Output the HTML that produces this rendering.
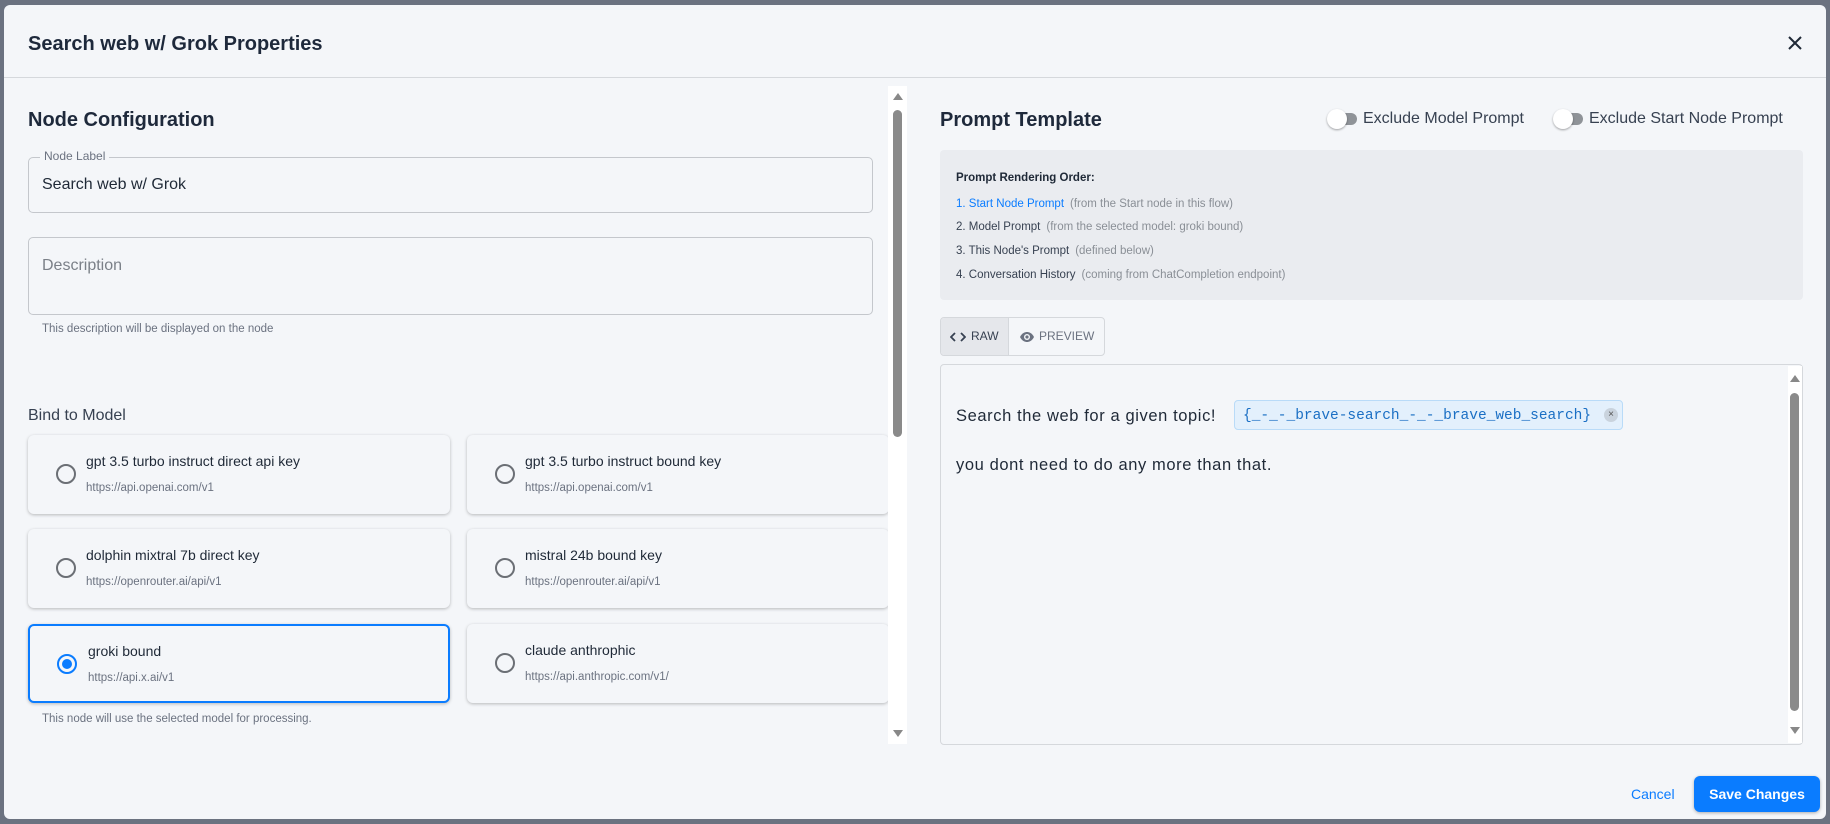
<!DOCTYPE html>
<html><head><meta charset="utf-8"><style>
*{box-sizing:border-box;margin:0;padding:0}
body{width:1830px;height:824px;background:#6b7280;font-family:"Liberation Sans",sans-serif;position:relative;overflow:hidden;color:#1f2937}
.modal{position:absolute;left:4px;top:5px;width:1822px;height:814px;background:#f4f6f9;border-radius:6px}
.abs{position:absolute}
.h1{font-size:20px;font-weight:bold;color:#1e293b}
.field{position:absolute;border:1px solid #c4c7cc;border-radius:5px}
.card{position:absolute;width:422px;height:79px;background:#f4f6f9;border-radius:6px;box-shadow:0 1px 3px rgba(0,0,0,.25)}
.card .r{position:absolute;left:28px;top:29px;width:20px;height:20px;border:2px solid #6b6f75;border-radius:50%}
.card .t{position:absolute;left:58px;top:18px;font-size:14px;color:#1f2937}
.card .u{position:absolute;left:58px;top:47px;font-size:11.5px;color:#6b7280}
.sel{border:2px solid #0a7cff}
.sm{font-size:12px;color:#6b7280}
.ord{position:absolute;left:16px;font-size:11.5px;color:#374151}
.ord span{color:#8a8f96;margin-left:6px}
.tog{position:absolute;width:28px;height:12px;background:#8f9398;border-radius:6px}
.tog:before{content:"";position:absolute;left:-2px;top:-4px;width:20px;height:20px;background:#fff;border-radius:50%;box-shadow:0 1px 2px rgba(0,0,0,.35)}
</style></head><body>
<div class="modal">
<div class="abs h1" style="left:24px;top:28px">Search web w/ Grok Properties</div>
<svg class="abs" style="left:1783px;top:30px" width="16" height="16" viewBox="0 0 16 16"><path d="M2 2L14 14M14 2L2 14" stroke="#1f2937" stroke-width="2"/></svg>
<div class="abs" style="left:0;top:72px;width:1822px;height:1px;background:#d5d8dc"></div>

<div class="abs h1" style="left:24px;top:104px">Node Configuration</div>
<div class="field" style="left:24px;top:152px;width:845px;height:56px"></div>
<div class="abs sm" style="left:36px;top:144px;background:#f4f6f9;padding:0 4px;font-size:12px">Node Label</div>
<div class="abs" style="left:38px;top:171px;font-size:16px;color:#1f2937">Search web w/ Grok</div>
<div class="field" style="left:24px;top:232px;width:845px;height:78px"></div>
<div class="abs" style="left:38px;top:252px;font-size:16px;color:#7b8088">Description</div>
<div class="abs sm" style="left:38px;top:318px;font-size:11.5px">This description will be displayed on the node</div>
<div class="abs" style="left:24px;top:402px;font-size:16px;color:#374151">Bind to Model</div>

<div class="card" style="left:24px;top:430px"><div class="r"></div><div class="t">gpt 3.5 turbo instruct direct api key</div><div class="u">https://api.openai.com/v1</div></div>
<div class="card" style="left:463px;top:430px"><div class="r"></div><div class="t">gpt 3.5 turbo instruct bound key</div><div class="u">https://api.openai.com/v1</div></div>
<div class="card" style="left:24px;top:524px"><div class="r"></div><div class="t">dolphin mixtral 7b direct key</div><div class="u">https://openrouter.ai/api/v1</div></div>
<div class="card" style="left:463px;top:524px"><div class="r"></div><div class="t">mistral 24b bound key</div><div class="u">https://openrouter.ai/api/v1</div></div>
<div class="card sel" style="left:24px;top:619px"><div class="r" style="border-color:#0a7cff;left:27px;top:28px"><div style="position:absolute;left:3px;top:3px;width:10px;height:10px;border-radius:50%;background:#0a7cff"></div></div><div class="t" style="left:58px;top:17px">groki bound</div><div class="u" style="left:58px;top:46px">https://api.x.ai/v1</div></div>
<div class="card" style="left:463px;top:619px"><div class="r"></div><div class="t">claude anthrophic</div><div class="u">https://api.anthropic.com/v1/</div></div>
<div class="abs sm" style="left:38px;top:708px;font-size:11.5px">This node will use the selected model for processing.</div>

<div class="abs" style="left:884px;top:81px;width:19px;height:658px;background:#fff"></div>
<div class="abs" style="left:889px;top:88px;width:0;height:0;border-left:5px solid transparent;border-right:5px solid transparent;border-bottom:7px solid #888"></div>
<div class="abs" style="left:889px;top:105px;width:9px;height:327px;background:#8a8a8a;border-radius:5px"></div>
<div class="abs" style="left:889px;top:725px;width:0;height:0;border-left:5px solid transparent;border-right:5px solid transparent;border-top:7px solid #888"></div>

<div class="abs h1" style="left:936px;top:104px">Prompt Template</div>
<div class="tog" style="left:1325px;top:108px"></div>
<div class="abs" style="left:1359px;top:105px;font-size:16px;color:#374151">Exclude Model Prompt</div>
<div class="tog" style="left:1551px;top:108px"></div>
<div class="abs" style="left:1585px;top:105px;font-size:16px;color:#374151">Exclude Start Node Prompt</div>

<div class="abs" style="left:936px;top:145px;width:863px;height:150px;background:#eaecf0;border-radius:4px">
<div class="ord" style="top:22px;font-weight:bold;color:#1f2937">Prompt Rendering Order:</div>
<div class="ord" style="top:48px;color:#0a7cff">1. Start Node Prompt<span>(from the Start node in this flow)</span></div>
<div class="ord" style="top:71px">2. Model Prompt<span>(from the selected model: groki bound)</span></div>
<div class="ord" style="top:95px">3. This Node's Prompt<span>(defined below)</span></div>
<div class="ord" style="top:119px">4. Conversation History<span>(coming from ChatCompletion endpoint)</span></div>
</div>

<div class="abs" style="left:936px;top:312px;width:165px;height:39px;border:1px solid #d5d8dc;border-radius:4px;overflow:hidden">
<div class="abs" style="left:0;top:0;width:68px;height:39px;background:#e5e7eb;border-right:1px solid #d5d8dc"></div>
<svg class="abs" style="left:9px;top:13px" width="16" height="12" viewBox="0 0 16 12"><path d="M5 2L1 6l4 4M11 2l4 4-4 4" stroke="#374151" stroke-width="1.8" fill="none"/></svg>
<div class="abs" style="left:30px;top:11px;font-size:12px;color:#374151">RAW</div>
<svg class="abs" style="left:78px;top:12px" width="16" height="14" viewBox="0 0 16 14"><path d="M1 7C3 3 6 2 8 2s5 1 7 5c-2 4-5 5-7 5S3 11 1 7z" fill="#6b7280"/><circle cx="8" cy="7" r="3" fill="#f4f6f9"/><circle cx="8" cy="7" r="1.6" fill="#6b7280"/></svg>
<div class="abs" style="left:98px;top:11px;font-size:12px;color:#6b7280">PREVIEW</div>
</div>

<div class="abs" style="left:936px;top:359px;width:863px;height:381px;border:1px solid #d5d8dc;border-radius:4px"></div>
<div class="abs" style="left:1784px;top:361px;width:14px;height:377px;background:#fff"></div>
<div class="abs" style="left:1786px;top:370px;width:0;height:0;border-left:5px solid transparent;border-right:5px solid transparent;border-bottom:7px solid #888"></div>
<div class="abs" style="left:1786px;top:388px;width:9px;height:318px;background:#8a8a8a;border-radius:5px"></div>
<div class="abs" style="left:1786px;top:722px;width:0;height:0;border-left:5px solid transparent;border-right:5px solid transparent;border-top:7px solid #888"></div>

<div class="abs" style="left:952px;top:402px;font-size:16.5px;letter-spacing:0.6px;color:#1f2937">Search the web for a given topic!</div>
<div class="abs" style="left:1230px;top:395px;width:389px;height:30px;background:#e3f0fc;border:1px solid #b9dbf8;border-radius:4px">
<div class="abs" style="left:8px;top:7px;font-family:'Liberation Mono',monospace;font-size:14.5px;color:#1a6fc4">{_-_-_brave-search_-_-_brave_web_search}</div>
<div class="abs" style="left:369px;top:7px;width:14px;height:14px;border-radius:50%;background:#c9d3dd;font-size:10px;color:#555;text-align:center;line-height:13px">×</div>
</div>
<div class="abs" style="left:952px;top:451px;font-size:16.5px;letter-spacing:0.6px;color:#1f2937">you dont need to do any more than that.</div>

<div class="abs" style="left:1627px;top:781px;font-size:14px;color:#0a7cff">Cancel</div>
<div class="abs" style="left:1690px;top:771px;width:126px;height:36px;background:#0a7cff;border-radius:6px;color:#fff;font-size:14px;font-weight:bold;text-align:center;line-height:36px;box-shadow:0 1px 3px rgba(0,0,0,.3)">Save Changes</div>
</div>
</body></html>
